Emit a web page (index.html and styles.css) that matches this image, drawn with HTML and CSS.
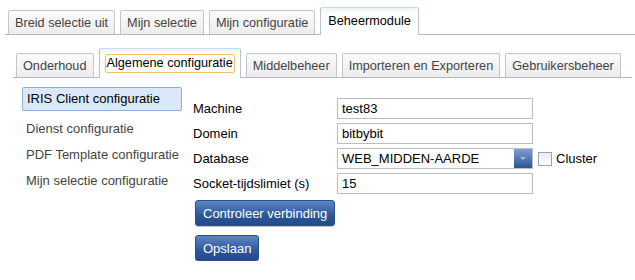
FILE: index.html
```html
<!DOCTYPE html>
<html lang="nl">
<head>
    <meta charset="UTF-8">
    <title>Beheermodule</title>
    <link rel="stylesheet" href="styles.css">
</head>
<body>

    <div class="tabbar main-tabs">
        <div class="tab">Breid selectie uit</div>
        <div class="tab">Mijn selectie</div>
        <div class="tab">Mijn configuratie</div>
        <div class="tab active">Beheermodule</div>
    </div>

    <div class="tabbar sub-tabs">
        <div class="tab">Onderhoud</div>
        <div class="tab active"><span class="focus">Algemene configuratie</span></div>
        <div class="tab">Middelbeheer</div>
        <div class="tab">Importeren en Exporteren</div>
        <div class="tab">Gebruikersbeheer</div>
    </div>

    <div class="content">
        <ul class="nav">
            <li class="selected">IRIS Client configuratie</li>
            <li>Dienst configuratie</li>
            <li>PDF Template configuratie</li>
            <li>Mijn selectie configuratie</li>
        </ul>

        <div class="form">
            <div class="row">
                <label>Machine</label>
                <div class="field">test83</div>
            </div>
            <div class="row">
                <label>Domein</label>
                <div class="field">bitbybit</div>
            </div>
            <div class="row">
                <label>Database</label>
                <div class="field select">
                    <span>WEB_MIDDEN-AARDE</span>
                    <span class="arrow"></span>
                </div>
                <span class="checkbox"></span>
                <span class="check-label">Cluster</span>
            </div>
            <div class="row">
                <label>Socket-tijdslimiet (s)</label>
                <div class="field">15</div>
            </div>
            <div class="buttons">
                <button class="btn">Controleer verbinding</button>
                <button class="btn">Opslaan</button>
            </div>
        </div>
    </div>

</body>
</html>
```

FILE: styles.css
```css
body {
    margin: 0;
    font-family: "Liberation Sans", Arial, sans-serif;
    font-size: 13px;
    color: #000;
    background: #fff;
}

.tabbar {
    display: flex;
    align-items: flex-end;
    gap: 5px;
    border-bottom: 1px solid #b3b8c0;
    font-size: 12.7px;
}

.main-tabs {
    margin: 7px 0 0 5px;
    padding-left: 3px;
    height: 27px;
}

.sub-tabs {
    margin: 13px 3px 0 13px;
    padding-left: 3px;
    height: 29px;
}

.tab {
    box-sizing: border-box;
    height: 24px;
    padding: 0 6px;
    line-height: 24px;
    color: #444;
    border: 1px solid #c3c6cb;
    border-bottom: none;
    border-radius: 2px 2px 0 0;
    background-image: linear-gradient(#fbfbfb, #ececec);
    white-space: nowrap;
}

.tab.active {
    height: 28px;
    line-height: 27px;
    margin-bottom: -1px;
    padding: 0 7px;
    color: #000;
    border-color: #b8c3d1;
    border-top-color: #c8d8ee;
    background-image: linear-gradient(#eef4fc, #fff 6px);
}

.sub-tabs .tab.active {
    height: 30px;
    padding: 0 5px;
    line-height: 28px;
}

.focus {
    display: inline-block;
    line-height: 17px;
    padding: 0 1px;
    border: 1px solid #efc36f;
    border-radius: 2px;
}

.content {
    display: flex;
    padding: 9px 0 0 22px;
}

.nav {
    list-style: none;
    margin: 0;
    padding: 0;
    width: 160px;
}

.nav li {
    height: 25px;
    line-height: 25px;
    padding-left: 4px;
    color: #444;
    white-space: nowrap;
    margin-bottom: 1px;
}

.nav li.selected {
    box-sizing: border-box;
    height: 24px;
    line-height: 22px;
    color: #000;
    background: #dbe8f9;
    border: 1px solid #8fafd6;
    border-radius: 2px;
    margin-bottom: 5px;
}

.form {
    padding: 11px 0 0 11px;
}

.row {
    display: flex;
    align-items: center;
    height: 21px;
    margin-bottom: 4px;
}

.row label {
    width: 144px;
}

.field {
    box-sizing: border-box;
    width: 196px;
    height: 21px;
    line-height: 19px;
    padding-left: 4px;
    border: 1px solid #b9bec6;
}

.select {
    display: flex;
    justify-content: space-between;
    padding-right: 0;
}

.arrow {
    width: 18px;
    height: 19px;
    background-image: linear-gradient(#7f9fcf, #2c5597);
    position: relative;
}

.arrow::after {
    content: "";
    position: absolute;
    left: 6px;
    top: 8px;
    border-left: 3px solid transparent;
    border-right: 3px solid transparent;
    border-top: 3px solid #a9bede;
}

.checkbox {
    box-sizing: border-box;
    width: 14px;
    height: 14px;
    margin-left: 5px;
    border: 1px solid #9aa3b0;
    background-image: linear-gradient(#e6ecf4, #fff);
}

.check-label {
    margin-left: 4px;
}

.buttons {
    display: flex;
    flex-direction: column;
    align-items: flex-start;
    gap: 9px;
    padding: 2px 0 0 2px;
}

.btn {
    height: 26px;
    padding: 0 7px;
    font-family: inherit;
    font-size: 13px;
    color: #fff;
    border: 1px solid #2b4f8a;
    border-radius: 3px;
    background-image: linear-gradient(#5d86c4, #2d5799 60%, #23498a);
    box-shadow: 0 1px 1px rgba(0, 0, 0, 0.25);
}
```
